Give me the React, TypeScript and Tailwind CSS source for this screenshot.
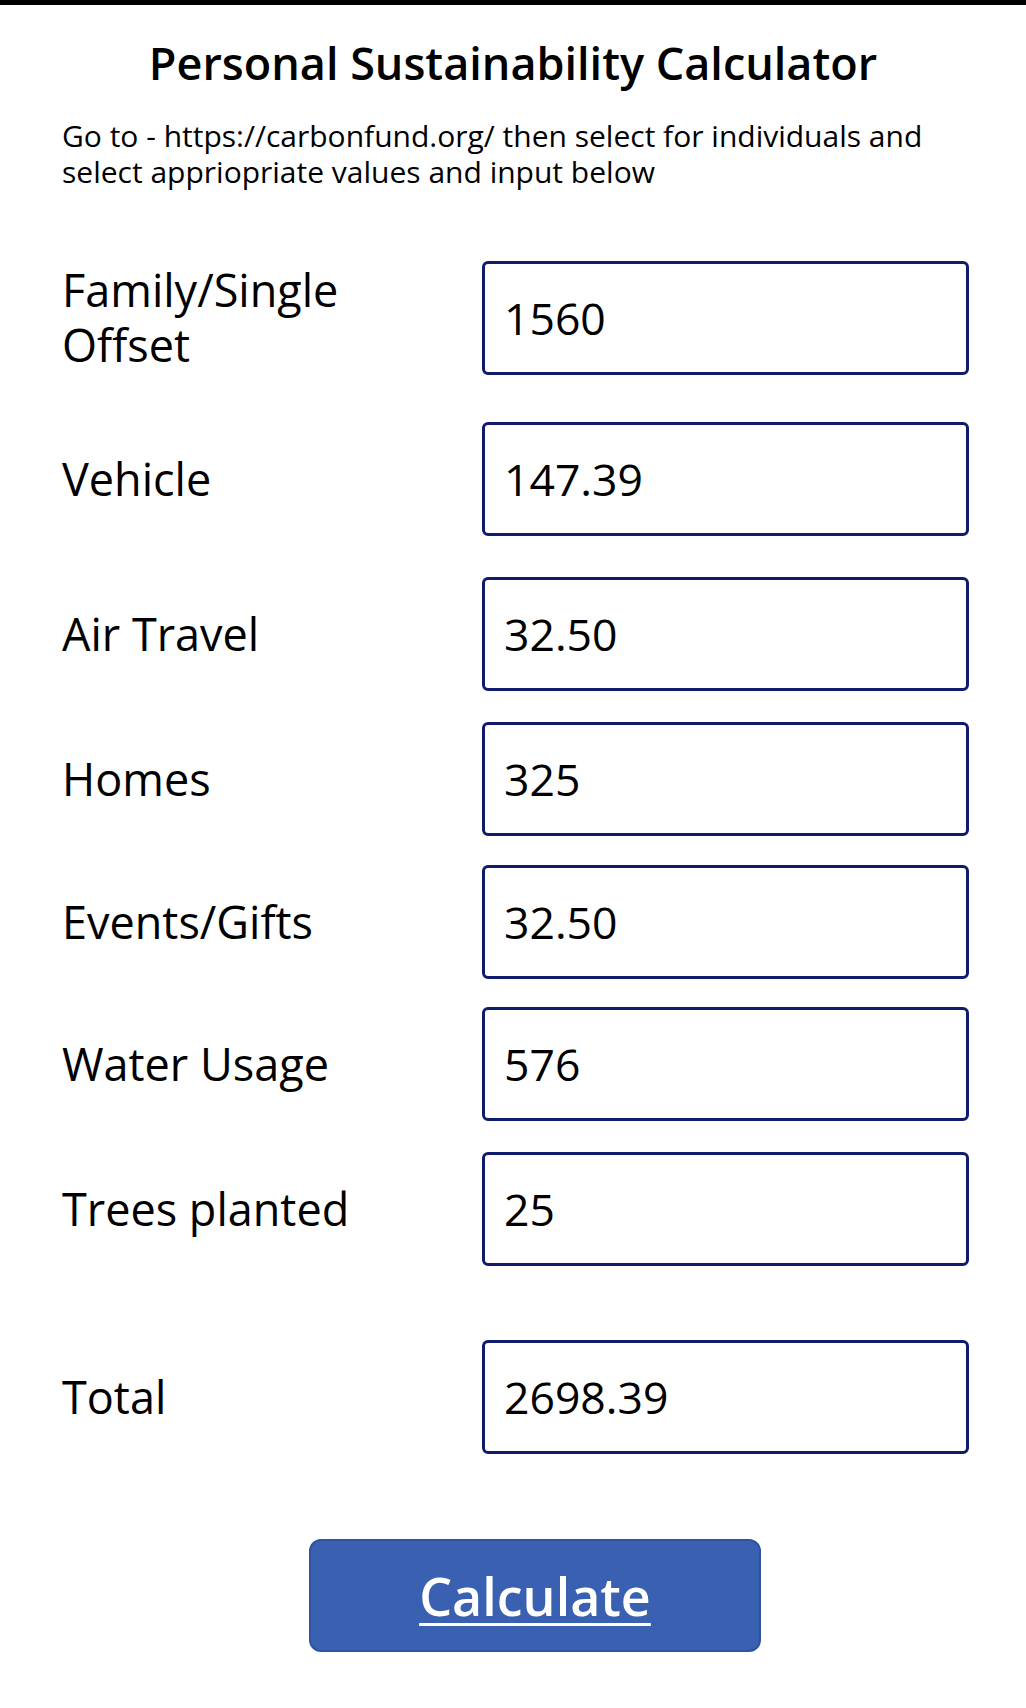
const rows = [
  { label: "Family/Single Offset", value: "1560", mt: "mt-[71px]" },
  { label: "Vehicle", value: "147.39", mt: "mt-[47px]" },
  { label: "Air Travel", value: "32.50", mt: "mt-[41px]" },
  { label: "Homes", value: "325", mt: "mt-[31px]" },
  { label: "Events/Gifts", value: "32.50", mt: "mt-[29px]" },
  { label: "Water Usage", value: "576", mt: "mt-[28px]" },
  { label: "Trees planted", value: "25", mt: "mt-[31px]" },
  { label: "Total", value: "2698.39", mt: "mt-[74px]" },
];

function Row({ label, value, mt }: { label: string; value: string; mt: string }) {
  return (
    <div className={`${mt} flex items-center`}>
      <div className="w-[420px] pr-4 pb-[2px] text-[45px] leading-[55px] text-black">
        {label === "Family/Single Offset" ? (
          <>
            Family/Single
            <br />
            Offset
          </>
        ) : (
          label
        )}
      </div>
      <div className="flex h-[114px] w-[487px] items-center rounded-[6px] border-[3px] border-[#101c6b] bg-white pl-[19px] text-[44.5px] text-black">
        {value}
      </div>
    </div>
  );
}

export default function App() {
  return (
    <div className="min-h-[1708px] bg-white font-['Open_Sans',sans-serif]">
      <div className="h-[5px] bg-black"></div>
      <h1 className="mt-[28px] text-center text-[45px] leading-[60px] font-semibold text-black">
        Personal Sustainability Calculator
      </h1>
      <p className="mt-[25px] px-[62px] text-[30px] leading-[36px] text-black">
        Go to - https://carbonfund.org/ then select for individuals and
        <br />
        select appriopriate values and input below
      </p>
      <div className="pl-[62px]">
        {rows.map((r) => (
          <Row key={r.label} {...r} />
        ))}
      </div>
      <div className="mt-[85px] pl-[309px]">
        <button className="flex h-[113px] w-[452px] items-center justify-center rounded-[12px] border-2 border-[#2f52a3] bg-[#3a60b1] text-[52px] font-semibold text-white underline decoration-[3px] underline-offset-[7px]">
          Calculate
        </button>
      </div>
    </div>
  );
}
